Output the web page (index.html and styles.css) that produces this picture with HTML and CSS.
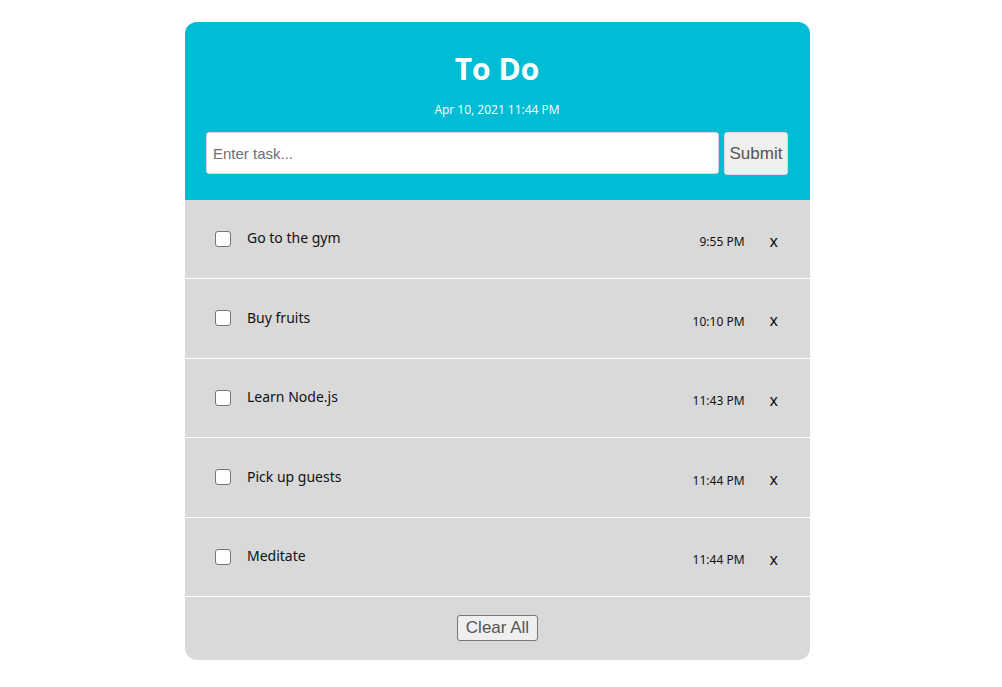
FILE: index.html
```html
<!DOCTYPE html>
<html>
<head>
<meta charset="utf-8">
<link rel="stylesheet" href="styles.css">
</head>
<body>
<div class="card">
  <header class="head">
    <h1 class="title">To Do</h1>
    <div class="date">Apr 10, 2021 11:44 PM</div>
    <form class="add">
      <input class="task-input" type="text" placeholder="Enter task...">
      <button class="submit" type="button">Submit</button>
    </form>
  </header>
  <ul class="list">
    <li class="item"><input class="check" type="checkbox"><span class="text">Go to the gym</span><span class="time">9:55 PM</span><span class="del">x</span></li>
    <li class="item"><input class="check" type="checkbox"><span class="text">Buy fruits</span><span class="time">10:10 PM</span><span class="del">x</span></li>
    <li class="item"><input class="check" type="checkbox"><span class="text">Learn Node.js</span><span class="time">11:43 PM</span><span class="del">x</span></li>
    <li class="item"><input class="check" type="checkbox"><span class="text">Pick up guests</span><span class="time">11:44 PM</span><span class="del">x</span></li>
    <li class="item"><input class="check" type="checkbox"><span class="text">Meditate</span><span class="time">11:44 PM</span><span class="del">x</span></li>
  </ul>
  <div class="foot"><button class="clear" type="button">Clear All</button></div>
</div>
</body>
</html>
```
FILE: styles.css
```css
html, body { margin: 0; padding: 0; background: #fff; }
body { font-family: "Noto Sans", "DejaVu Sans", sans-serif; }
.card {
  width: 625px;
  margin: 22px 0 0 185px;
  border-radius: 12px;
  overflow: hidden;
  background: #d9d9d9;
}
.head {
  background: #00bcd4;
  color: #fff;
  height: 177.5px;
  box-sizing: border-box;
  padding: 29px 22px 0 21px;
  display: flex;
  flex-direction: column;
  align-items: center;
}
.title {
  margin: 0;
  font-family: "Open Sans", sans-serif;
  font-weight: 700;
  font-size: 30px;
  line-height: 36px;
}
.date {
  margin-top: 15px;
  font-family: "Open Sans", sans-serif;
  font-size: 12px;
  line-height: 16px;
}
.add {
  margin: 14px 0 0;
  display: flex;
  gap: 5px;
  align-self: stretch;
}
.task-input {
  flex: 1;
  height: 42px;
  box-sizing: border-box;
  border: 1px solid #d6d6d6;
  border-radius: 3px;
  padding: 0 6px;
  font-family: "Liberation Sans", Arial, sans-serif;
  font-size: 15px;
  color: #333;
  outline: none;
}
.task-input::placeholder { color: #6f6f6f; }
.submit {
  width: 64px;
  height: 43px;
  box-sizing: border-box;
  border: 1px solid #d8d8d8;
  border-radius: 3px;
  background: #efefef;
  color: #555;
  font-family: "Liberation Sans", Arial, sans-serif;
  font-size: 17px;
  padding: 0;
}
.list { list-style: none; margin: 0; padding: 0; }
.item {
  height: 78.5px;
  border-bottom: 1px solid #fff;
  display: flex;
  align-items: center;
  padding: 0 32px 0 30px;
  color: #111;
}
.check {
  appearance: none;
  -webkit-appearance: none;
  width: 16px;
  height: 16px;
  margin: 0 16px 0 0;
  background: #fff;
  border: 1px solid #767676;
  border-radius: 3px;
  box-sizing: border-box;
}
.text {
  flex: 1;
  font-size: 14px;
  margin-top: -2px;
}
.time {
  font-size: 12px;
  margin-top: 6px;
}
.del {
  font-size: 16px;
  margin-left: 25px;
  margin-top: 4px;
}
.foot {
  height: 63px;
  display: flex;
  align-items: center;
  justify-content: center;
}
.clear {
  height: 26px;
  padding: 0 8px;
  border: 1px solid #767676;
  border-radius: 3px;
  background: #efefef;
  color: #555;
  font-family: "Liberation Sans", Arial, sans-serif;
  font-size: 17px;
  margin-top: -2px;
}
```
